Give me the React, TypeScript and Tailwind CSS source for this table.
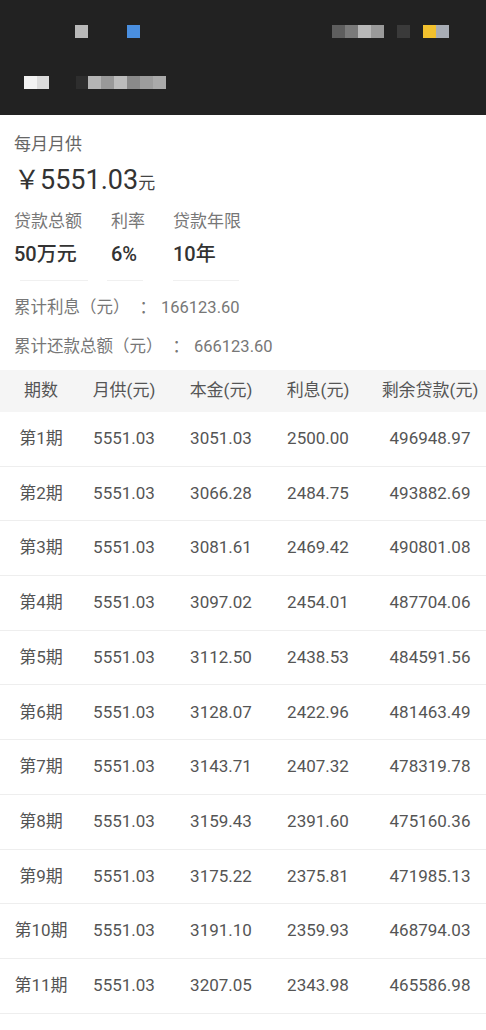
import React from 'react';

const rows = [
  ['第1期', '5551.03', '3051.03', '2500.00', '496948.97'],
  ['第2期', '5551.03', '3066.28', '2484.75', '493882.69'],
  ['第3期', '5551.03', '3081.61', '2469.42', '490801.08'],
  ['第4期', '5551.03', '3097.02', '2454.01', '487704.06'],
  ['第5期', '5551.03', '3112.50', '2438.53', '484591.56'],
  ['第6期', '5551.03', '3128.07', '2422.96', '481463.49'],
  ['第7期', '5551.03', '3143.71', '2407.32', '478319.78'],
  ['第8期', '5551.03', '3159.43', '2391.60', '475160.36'],
  ['第9期', '5551.03', '3175.22', '2375.81', '471985.13'],
  ['第10期', '5551.03', '3191.10', '2359.93', '468794.03'],
  ['第11期', '5551.03', '3207.05', '2343.98', '465586.98'],
];

const cols = 'grid grid-cols-[82px_84px_110px_84px_140px]';

const Summary = ({ label, value, box, line }: { label: string; value: string; box: string; line: string }) => (
  <div className={`flex flex-col shrink-0 ${box}`}>
    <div className="text-[17px] leading-[24px] text-[#777]">{label}</div>
    <div className="mt-[7px] text-[20px] leading-[28px] font-medium text-[#333]">{value}</div>
    <div className={`mt-[12px] h-px bg-[#f0f0f0] ${line}`} />
  </div>
);

export default function App() {
  return (
    <div className="w-[486px] h-[1030px] overflow-hidden bg-white font-['Roboto','Noto_Sans_CJK_SC',sans-serif]">
      <header className="h-[115px] bg-[#222222] flex flex-col">
        <div className="flex items-center h-[13px] mt-[25px]">
          <div className="ml-[75px] w-[13px] h-[13px] bg-[#b9b9b9]" />
          <div className="ml-[39px] w-[13px] h-[13px] bg-[#4a8fe0]" />
          <div className="ml-auto flex">
            <div className="w-[13px] h-[13px] bg-[#5e5e5e]" />
            <div className="w-[13px] h-[13px] bg-[#7a7a7a]" />
            <div className="w-[13px] h-[13px] bg-[#b8b8b8]" />
            <div className="w-[13px] h-[13px] bg-[#9a9a9a]" />
            <div className="ml-[13px] w-[13px] h-[13px] bg-[#3a3a3a]" />
            <div className="ml-[13px] w-[13px] h-[13px] bg-[#f2c12e]" />
            <div className="w-[13px] h-[13px] bg-[#a8adb5]" />
          </div>
          <div className="w-[37px]" />
        </div>
        <div className="flex items-center h-[13px] mt-[38px]">
          <div className="ml-[24px] w-[13px] h-[13px] bg-[#f2f2f2]" />
          <div className="w-[12px] h-[13px] bg-[#dcdcdc]" />
          <div className="ml-[27px] w-[12px] h-[13px] bg-[#2e2e2e]" />
          <div className="w-[13px] h-[13px] bg-[#b5b5b5]" />
          <div className="w-[13px] h-[13px] bg-[#999]" />
          <div className="w-[13px] h-[13px] bg-[#bcbcbc]" />
          <div className="w-[13px] h-[13px] bg-[#8a8a8a]" />
          <div className="w-[13px] h-[13px] bg-[#9d9d9d]" />
          <div className="w-[13px] h-[13px] bg-[#aaa]" />
        </div>
      </header>

      <section className="px-[14px] pt-[17px]">
        <div className="text-[17px] leading-[24px] text-[#666]">每月月供</div>
        <div className="mt-[6px] flex items-baseline leading-[36px] text-[#333]">
          <span className="text-[26px]">￥</span>
          <span className="text-[27px]">5551.03</span>
          <span className="text-[17px] text-[#444]">元</span>
        </div>
        <div className="mt-[8px] flex">
          <Summary label="贷款总额" value="50万元" box="w-[97px]" line="w-[68px] ml-[6px]" />
          <Summary label="利率" value="6%" box="w-[62px]" line="w-[36px] ml-[-4px]" />
          <Summary label="贷款年限" value="10年" box="w-[80px]" line="w-[66px]" />
        </div>
        <div className="mt-[15px] flex text-[16.5px] leading-[24px] text-[#777] whitespace-nowrap">
          <span>累计利息（元）</span>
          <span className="ml-[10px]">：</span>
          <span className="ml-[5px]">166123.60</span>
        </div>
        <div className="mt-[15px] flex text-[16.5px] leading-[24px] text-[#777] whitespace-nowrap">
          <span>累计还款总额（元）</span>
          <span className="ml-[10px]">：</span>
          <span className="ml-[5px]">666123.60</span>
        </div>
      </section>

      <div className="mt-[11px]">
        <div className={`${cols} h-[42px] items-center bg-[#f5f5f5] text-[17px] text-[#555] text-center whitespace-nowrap`}>
          <div>期数</div>
          <div>月供(元)</div>
          <div>本金(元)</div>
          <div>利息(元)</div>
          <div>剩余贷款(元)</div>
        </div>
        {rows.map((r) => (
          <div
            key={r[0]}
            className={`${cols} h-[54.7px] items-center border-b border-[#eeeeee] text-[17px] text-[#555] text-center whitespace-nowrap`}
          >
            {r.map((c, i) => (
              <div key={i}>{c}</div>
            ))}
          </div>
        ))}
      </div>
    </div>
  );
}
